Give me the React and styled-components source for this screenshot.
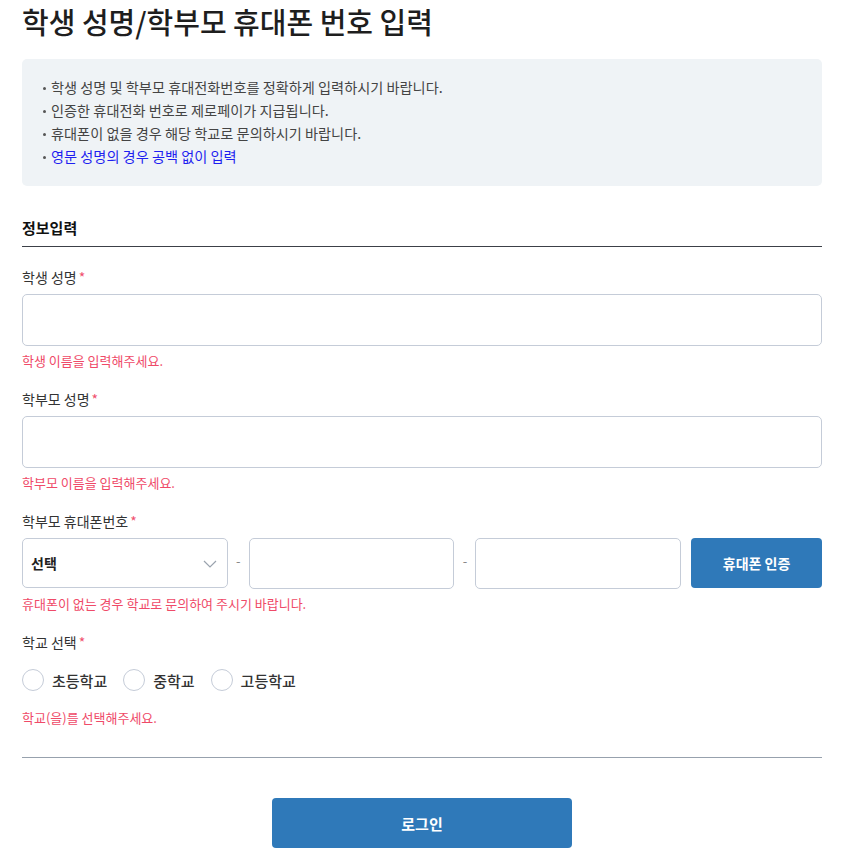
import React, { useState } from "react";
import styled, { createGlobalStyle } from "styled-components";

const GlobalStyle = createGlobalStyle`
  body {
    margin: 0;
    background: #fff;
    font-family: "Noto Sans CJK KR", "Noto Sans", sans-serif;
    color: #222;
  }
  * { box-sizing: border-box; }
`;

const Page = styled.div`
  width: 800px;
  margin-left: 22px;
  padding-top: 1px;
`;

const Title = styled.h1`
  margin: 0;
  font-size: 29px;
  font-weight: 500;
  line-height: 40px;
  color: #1e1e1e;
`;

const Notice = styled.ul`
  list-style: none;
  margin: 18px 0 0;
  padding: 17px 0 18px 21px;
  background: #eff3f6;
  border-radius: 5px;
`;

const NoticeItem = styled.li`
  position: relative;
  padding-left: 8px;
  font-size: 14.2px;
  line-height: 23px;
  color: ${(p) => (p.$blue ? "#1f1ff0" : "#444")};

  &::before {
    content: "";
    position: absolute;
    left: 0;
    top: 11px;
    width: 3px;
    height: 3px;
    border-radius: 50%;
    background: #555;
  }
`;

const SectionTitle = styled.h2`
  margin: 31px 0 0;
  padding-bottom: 7px;
  font-size: 15px;
  font-weight: 700;
  line-height: 22px;
  color: #111;
  border-bottom: 1px solid #3c4048;
`;

const Field = styled.div`
  margin-top: ${(p) => p.$top || 19}px;
`;

const Label = styled.div`
  font-size: 14px;
  line-height: 20px;
  color: #333;
  margin-bottom: 7px;

  em {
    font-style: normal;
    color: #f0506e;
    margin-left: 2px;
  }
`;

const TextInput = styled.input`
  display: block;
  width: ${(p) => p.$width || "100%"};
  height: 52px;
  border: 1px solid #c5ccd8;
  border-radius: 5px;
  padding: 0 14px;
  font: inherit;
  font-size: 14px;
  outline: none;
  background: #fff;
`;

const ErrorText = styled.div`
  margin-top: ${(p) => p.$top || 6}px;
  font-size: 13px;
  line-height: 18px;
  color: #ef4a68;
`;

const PhoneRow = styled.div`
  display: flex;
  align-items: flex-start;
  height: 51px;

  ${TextInput} {
    height: 51px;
  }
`;

const Dash = styled.span`
  width: 21px;
  line-height: 46px;
  text-align: center;
  font-size: 13px;
  color: #888;
`;

const SelectBox = styled.div`
  position: relative;
  width: 206px;
  height: 50px;
  border: 1px solid #c5ccd8;
  border-radius: 5px;
  display: flex;
  align-items: center;
  padding: 0 8px;
  font-size: 14px;
  font-weight: 700;
  color: #222;

  svg {
    position: absolute;
    right: 10px;
    top: 21px;
  }
`;

const BlueButton = styled.button`
  border: 0;
  border-radius: 4px;
  background: #2f79b9;
  color: #fff;
  font-family: inherit;
  font-weight: 700;
  cursor: pointer;
`;

const VerifyButton = styled(BlueButton)`
  width: 131px;
  height: 50px;
  margin-left: 10px;
  font-size: 14px;
`;

const RadioRow = styled.div`
  display: flex;
  align-items: center;
  gap: 16px;
  margin-top: 17px;
`;

const RadioLabel = styled.label`
  display: flex;
  align-items: center;
  gap: 8px;
  font-size: 15px;
  font-weight: 500;
  color: #333;
  cursor: pointer;
`;

const RadioCircle = styled.span`
  width: 22px;
  height: 22px;
  border-radius: 50%;
  border: 1px solid #c5ccd8;
  background: #fff;
`;

const Divider = styled.hr`
  margin: 30px 0 0;
  border: 0;
  border-top: 1px solid #97a1ad;
`;

const LoginWrap = styled.div`
  display: flex;
  justify-content: center;
  margin-top: 40px;
`;

const LoginButton = styled(BlueButton)`
  width: 300px;
  height: 50px;
  font-size: 15px;
`;

const Chevron = () => (
  <svg width="14" height="8" viewBox="0 0 14 8" fill="none">
    <path d="M1 1l6 6 6-6" stroke="#9aa3ae" strokeWidth="1.2" />
  </svg>
);

export default function App() {
  const [school, setSchool] = useState(null);
  const schools = ["초등학교", "중학교", "고등학교"];

  return (
    <Page>
      <GlobalStyle />
      <Title>학생 성명/학부모 휴대폰 번호 입력</Title>
      <Notice>
        <NoticeItem>학생 성명 및 학부모 휴대전화번호를 정확하게 입력하시기 바랍니다.</NoticeItem>
        <NoticeItem>인증한 휴대전화 번호로 제로페이가 지급됩니다.</NoticeItem>
        <NoticeItem>휴대폰이 없을 경우 해당 학교로 문의하시기 바랍니다.</NoticeItem>
        <NoticeItem $blue>영문 성명의 경우 공백 없이 입력</NoticeItem>
      </Notice>

      <SectionTitle>정보입력</SectionTitle>

      <Field $top={20}>
        <Label>학생 성명<em>*</em></Label>
        <TextInput />
        <ErrorText>학생 이름을 입력해주세요.</ErrorText>
      </Field>

      <Field>
        <Label>학부모 성명<em>*</em></Label>
        <TextInput />
        <ErrorText>학부모 이름을 입력해주세요.</ErrorText>
      </Field>

      <Field>
        <Label>학부모 휴대폰번호<em>*</em></Label>
        <PhoneRow>
          <SelectBox>
            선택
            <Chevron />
          </SelectBox>
          <Dash>-</Dash>
          <TextInput $width="206px" />
          <Dash>-</Dash>
          <TextInput $width="206px" />
          <VerifyButton>휴대폰 인증</VerifyButton>
        </PhoneRow>
        <ErrorText>휴대폰이 없는 경우 학교로 문의하여 주시기 바랍니다.</ErrorText>
      </Field>

      <Field>
        <Label>학교 선택<em>*</em></Label>
        <RadioRow>
          {schools.map((s) => (
            <RadioLabel key={s} onClick={() => setSchool(s)}>
              <RadioCircle />
              {s}
            </RadioLabel>
          ))}
        </RadioRow>
        <ErrorText $top={18}>학교(을)를 선택해주세요.</ErrorText>
      </Field>

      <Divider />

      <LoginWrap>
        <LoginButton>로그인</LoginButton>
      </LoginWrap>
    </Page>
  );
}
